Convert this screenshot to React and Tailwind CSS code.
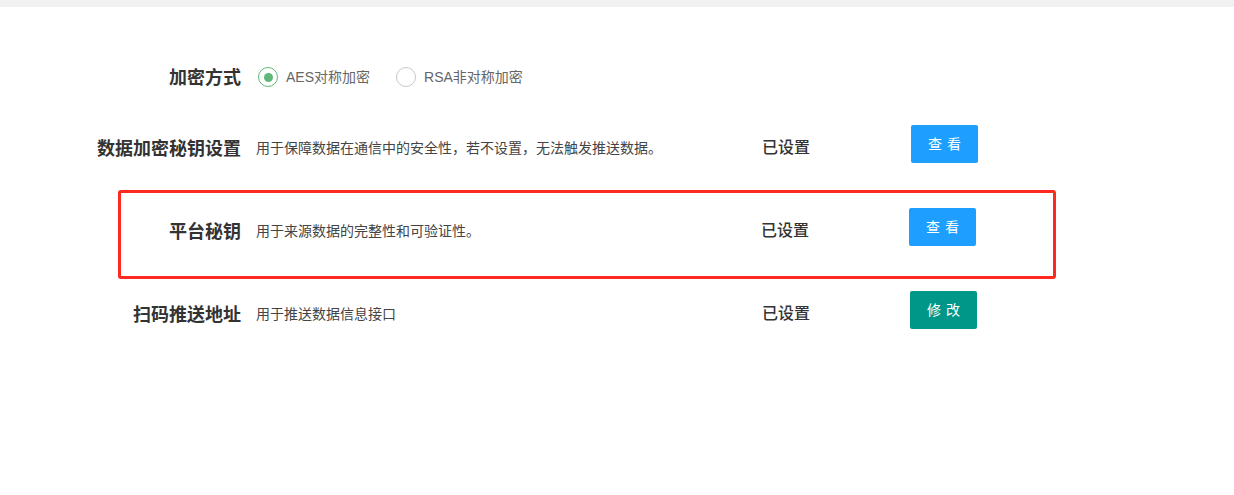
import React from "react";

function Radio({ checked, label }) {
  return (
    <div className="flex items-center">
      <span
        className={
          checked
            ? "flex h-[20px] w-[20px] items-center justify-center rounded-full border-[1.5px] border-[#5FB878]"
            : "flex h-[20px] w-[20px] items-center justify-center rounded-full border-[1.5px] border-[#c8c8c8]"
        }
      >
        {checked && <span className="h-[9px] w-[9px] rounded-full bg-[#5FB878]" />}
      </span>
      <span className="ml-[8px] text-[14px] leading-none text-[#666]">{label}</span>
    </div>
  );
}

function Row({ label, desc, btn, green, statusClass }) {
  return (
    <div className="flex h-[38px] items-start">
      <div className="mt-[10px] w-[241px] shrink-0 text-right text-[18px] font-bold leading-[28px] text-[#333]">
        {label}
      </div>
      <div className="mt-[12px] ml-[15px] w-[506px] shrink-0 text-[14px] leading-[22px] text-[#444]">
        {desc}
      </div>
      <div className={statusClass}>已设置</div>
      <button
        className={
          green
            ? "flex h-[38px] w-[67px] items-center justify-center rounded-[2px] bg-[#009688] pl-[5px] text-[14px] tracking-[5px] text-white"
            : "flex h-[38px] w-[67px] items-center justify-center rounded-[2px] bg-[#1E9FFF] pl-[5px] text-[14px] tracking-[5px] text-white"
        }
      >
        {btn}
      </button>
    </div>
  );
}

export default function App() {
  return (
    <div className="min-h-[495px] bg-white font-['Liberation_Sans','Noto_Sans_CJK_SC',sans-serif]">
      <div className="h-[7px] bg-[#f0f1f0]" />
      <div className="flex flex-col pt-[50px]">
        <div className="flex h-[40px] items-center">
          <div className="mt-[2px] w-[241px] shrink-0 text-right text-[18px] font-bold leading-[28px] text-[#333]">
            加密方式
          </div>
          <div className="ml-[17px] flex items-center gap-[26px]">
            <Radio checked label="AES对称加密" />
            <Radio label="RSA非对称加密" />
          </div>
        </div>
        <div className="mt-[28px]">
          <Row
            label="数据加密秘钥设置"
            desc="用于保障数据在通信中的安全性，若不设置，无法触发推送数据。"
            btn="查看"
            statusClass="mt-[11px] w-[149px] shrink-0 text-[16px] font-medium leading-[24px] text-[#333]"
          />
        </div>
        <div className="relative mt-[45px]">
          <Row
            label="平台秘钥"
            desc="用于来源数据的完整性和可验证性。"
            btn="查看"
            statusClass="mt-[11px] ml-[-1px] w-[148px] shrink-0 text-[16px] font-medium leading-[24px] text-[#333]"
          />
          <div className="pointer-events-none absolute top-[-18px] left-[118px] h-[89px] w-[938px] rounded-[3px] border-[3px] border-[#ff2a1f]" />
        </div>
        <div className="mt-[45px]">
          <Row
            label="扫码推送地址"
            desc="用于推送数据信息接口"
            btn="修改"
            green
            statusClass="mt-[11px] w-[148px] shrink-0 text-[16px] font-medium leading-[24px] text-[#333]"
          />
        </div>
      </div>
    </div>
  );
}
